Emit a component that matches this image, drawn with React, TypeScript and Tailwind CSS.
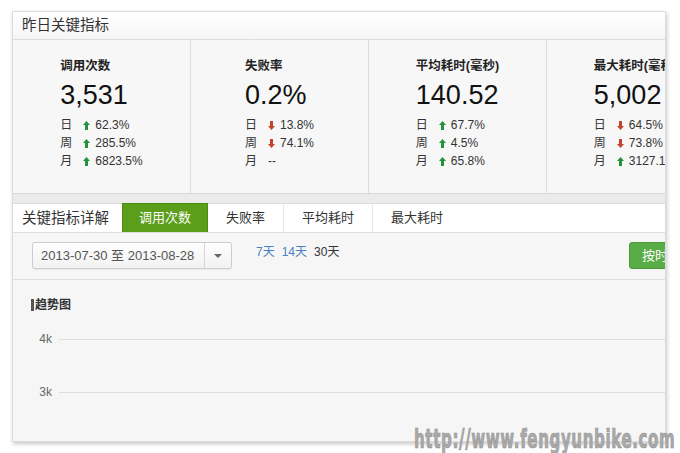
import React from 'react';

type Trend = 'up' | 'down' | 'none';

interface Metric {
  title: string;
  value: string;
  rows: { label: string; trend: Trend; text: string }[];
}

const metrics: Metric[] = [
  {
    title: '调用次数',
    value: '3,531',
    rows: [
      { label: '日', trend: 'up', text: '62.3%' },
      { label: '周', trend: 'up', text: '285.5%' },
      { label: '月', trend: 'up', text: '6823.5%' },
    ],
  },
  {
    title: '失败率',
    value: '0.2%',
    rows: [
      { label: '日', trend: 'down', text: '13.8%' },
      { label: '周', trend: 'down', text: '74.1%' },
      { label: '月', trend: 'none', text: '--' },
    ],
  },
  {
    title: '平均耗时(毫秒)',
    value: '140.52',
    rows: [
      { label: '日', trend: 'up', text: '67.7%' },
      { label: '周', trend: 'up', text: '4.5%' },
      { label: '月', trend: 'up', text: '65.8%' },
    ],
  },
  {
    title: '最大耗时(毫秒)',
    value: '5,002',
    rows: [
      { label: '日', trend: 'down', text: '64.5%' },
      { label: '周', trend: 'down', text: '73.8%' },
      { label: '月', trend: 'up', text: '3127.1%' },
    ],
  },
];

const tabs = ['调用次数', '失败率', '平均耗时', '最大耗时'];

function Arrow({ trend }: { trend: Trend }) {
  if (trend === 'none') return null;
  const up = trend === 'up';
  return (
    <svg width="7" height="9" viewBox="0 0 7 9" className="mr-[5px] shrink-0">
      <path
        d={up ? 'M3.5 0 L7 4 H5 V9 H2 V4 H0 Z' : 'M3.5 9 L7 5 H5 V0 H2 V5 H0 Z'}
        fill={up ? '#23923a' : '#c4432b'}
      />
    </svg>
  );
}

function MetricCell({ m }: { m: Metric }) {
  return (
    <div className="w-[178px] shrink-0 border-r border-[#dddddd] flex justify-center">
      <div className="pt-[17px]">
        <div className="text-[12.5px] leading-[18px] font-bold text-[#222] whitespace-nowrap">{m.title}</div>
        <div className="mt-[4px] text-[27px] leading-[32px] text-[#111]">{m.value}</div>
        <div className="mt-[5px]">
          {m.rows.map(r => (
            <div key={r.label} className="flex items-center h-[18px] text-[12px] text-[#333] whitespace-nowrap">
              <span className="w-[23px] shrink-0">{r.label}</span>
              <Arrow trend={r.trend} />
              <span>{r.text}</span>
            </div>
          ))}
        </div>
      </div>
    </div>
  );
}

export default function App() {
  return (
    <div
      className="relative w-[680px] h-[453px] bg-white overflow-hidden pt-[11px] pl-[12px]"
      style={{ fontFamily: '"Liberation Sans", "Noto Sans CJK SC", sans-serif' }}
    >
      <div className="w-[654px] h-[431px] border border-[#dcdcdc] bg-[#f6f6f6] overflow-hidden shadow-[1px_2px_4px_rgba(0,0,0,0.22)]">
        {/* header */}
        <div className="h-[28px] border-b border-[#dddddd] bg-gradient-to-b from-white to-[#f6f6f6] pl-[9px] text-[14.5px] leading-[27px] text-[#333]">
          昨日关键指标
        </div>

        {/* metrics */}
        <div className="flex h-[154px] bg-[#f7f7f7] border-b border-[#d8d8d8]">
          {metrics.map(m => (
            <MetricCell key={m.title} m={m} />
          ))}
        </div>
        <div className="h-[10px] bg-[#ebebeb] border-b border-[#dcdcdc]" />

        {/* tabs */}
        <div className="flex h-[29px] bg-white border-b border-[#dddddd]">
          <div className="w-[109px] shrink-0 pl-[9px] text-[14.5px] leading-[28px] text-[#333]">关键指标详解</div>
          {tabs.map((t, i) => (
            <div
              key={t}
              className={
                i === 0
                  ? 'px-[16px] leading-[28px] text-[13px] text-white bg-[#5a9e1a] border border-[#4b8b12] border-b-0 -mt-px h-[29px]'
                  : i === tabs.length - 1
                    ? 'px-[18px] h-[28px] leading-[28px] text-[13px] text-[#333]'
                    : 'px-[18px] h-[28px] leading-[28px] text-[13px] text-[#333] border-r border-[#e6e6e6]'
              }
            >
              {t}
            </div>
          ))}
        </div>

        {/* filter row */}
        <div className="flex w-[720px] h-[47px] pt-[9px] pl-[19px] border-b border-[#dddddd] items-start">
          <div className="flex w-[200px] h-[27px] rounded-[3px] border border-[#cccccc] bg-gradient-to-b from-white to-[#f1f1f1] shadow-[0_1px_1px_rgba(0,0,0,0.05)]">
            <div className="w-[172px] pl-[8px] text-[13px] leading-[25px] text-[#555] whitespace-nowrap border-r border-[#d6d6d6]">
              2013-07-30 至 2013-08-28
            </div>
            <div className="flex-1 flex items-center justify-center">
              <svg width="8" height="4" viewBox="0 0 8 4">
                <path d="M0 0 H8 L4 4 Z" fill="#666" />
              </svg>
            </div>
          </div>
          <div className="ml-[24px] flex gap-[7px] text-[12px] leading-[20px]">
            <span className="text-[#4a7fc1]">7天</span>
            <span className="text-[#4a7fc1]">14天</span>
            <span className="text-[#333]">30天</span>
          </div>
          <div className="ml-auto w-[104px] shrink-0 h-[27px] rounded-[3px] bg-[#5aad46] border border-[#4a9a38] pl-[12px] text-[13px] leading-[25px] text-white">
            按时间粒度
          </div>
        </div>

        {/* chart */}
        <div className="pt-[18px]">
          <div className="flex items-center h-[14px] pl-[18px]">
            <div className="w-[3px] h-[12px] bg-[#555]" />
            <span className="ml-[1px] text-[12px] font-bold text-[#333] leading-[14px]">趋势图</span>
          </div>
          <div className="mt-[17px]">
            <div className="flex items-center h-[20px]">
              <span className="w-[39px] text-right text-[12px] text-[#666]">4k</span>
              <div className="ml-[7px] flex-1 h-px bg-[#dddddd]" />
            </div>
            <div className="flex items-center h-[20px] mt-[33px]">
              <span className="w-[39px] text-right text-[12px] text-[#666]">3k</span>
              <div className="ml-[7px] flex-1 h-px bg-[#dddddd]" />
            </div>
            <div className="flex items-center h-[20px] mt-[36px]">
              <span className="w-[39px] text-right text-[12px] text-[#666]">2k</span>
              <div className="ml-[7px] flex-1 h-px bg-[#dddddd]" />
            </div>
          </div>
        </div>
      </div>

      {/* watermark */}
      <div
        className="absolute left-[414px] top-[419px] text-[27px] font-bold text-[#a9a9a9] origin-left scale-x-[0.62] whitespace-nowrap tracking-[1px]"
        style={{ fontFamily: '"DejaVu Sans Condensed", "Liberation Sans", sans-serif', WebkitTextStroke: '0.6px #8f8f8f' }}
      >
        http://www.fengyunbike.com
      </div>
    </div>
  );
}
